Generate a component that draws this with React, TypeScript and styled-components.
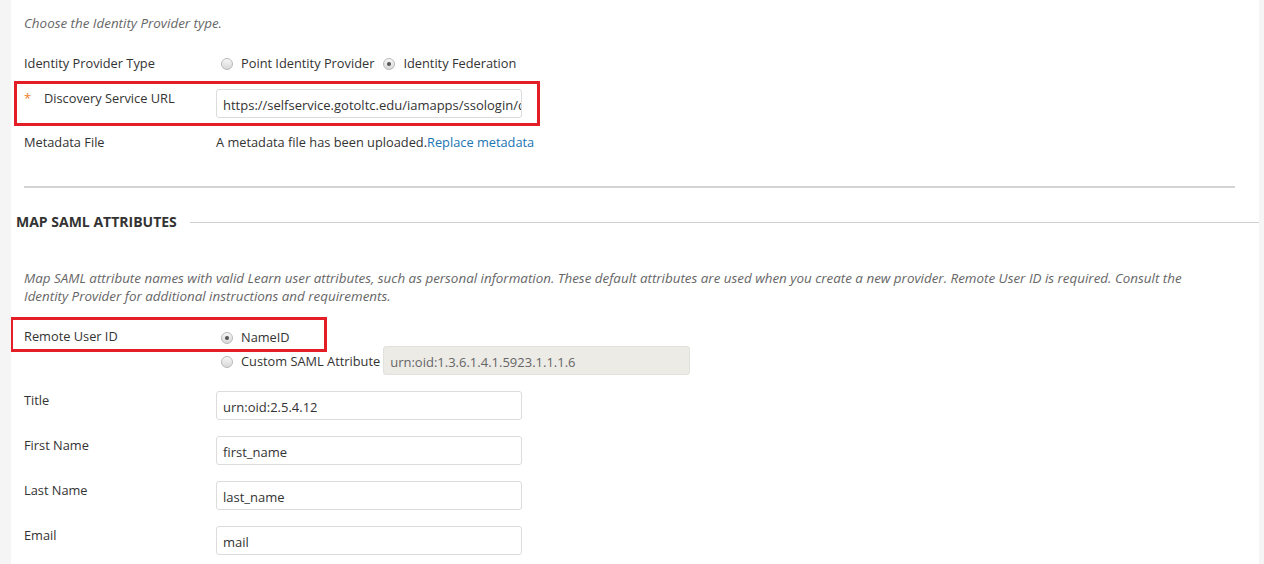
import React from 'react'
import styled, { createGlobalStyle } from 'styled-components'

const GlobalStyle = createGlobalStyle`
  html, body {
    margin: 0;
    padding: 0;
    background: #f5f5f5;
  }
  body {
    font-family: "Open Sans", "Liberation Sans", Arial, sans-serif;
    font-size: 12.8px;
    color: #333;
  }
`

const Page = styled.div`
  margin: 0 5px 0 11px;
  background: #fff;
  height: 564px;
  overflow: hidden;
`

const Instructions = styled.p<{ top: number }>`
  margin: ${({ top }) => top}px 0 0 13px;
  font-style: italic;
  font-size: 13.4px;
  color: #666;
  line-height: 18px;
`

const FieldRow = styled.div<{ top: number }>`
  position: relative;
  display: flex;
  align-items: flex-start;
  margin-top: ${({ top }) => top}px;
  padding-left: 13px;
  line-height: 18px;
`

const Label = styled.div`
  width: 192px;
  flex-shrink: 0;
  display: flex;
`

const Required = styled.span`
  width: 20px;
  color: #ef7f2b;
  font-size: 13px;
`

const Field = styled.div`
  display: flex;
  flex-direction: column;
`

const RadioGroup = styled.div`
  display: flex;
  align-items: center;
  padding-left: 5px;
`

const Option = styled.label`
  display: flex;
  align-items: center;
  margin-right: 9px;
  white-space: nowrap;
`

const RadioDot = styled.span<{ checked?: boolean }>`
  position: relative;
  display: inline-block;
  flex-shrink: 0;
  width: 12px;
  height: 12px;
  margin: 2px 8px 0 0;
  box-sizing: border-box;
  border-radius: 50%;
  border: 1px solid #b9b9b9;
  background: linear-gradient(#f7f7f7, #d8d8d8);
  &::after {
    content: '';
    display: ${({ checked }) => (checked ? 'block' : 'none')};
    position: absolute;
    left: 3px;
    top: 3px;
    width: 4px;
    height: 4px;
    border-radius: 50%;
    background: #555;
  }
`

const TextInput = styled.div<{ disabled?: boolean }>`
  width: 306px;
  height: 29px;
  box-sizing: border-box;
  padding: 2px 6px 0;
  display: flex;
  align-items: center;
  overflow: hidden;
  white-space: nowrap;
  font-size: 13px;
  border: 1px solid ${({ disabled }) => (disabled ? '#e2e1db' : '#dcdcdc')};
  border-radius: 3px;
  background: ${({ disabled }) => (disabled ? '#ecebe6' : '#fff')};
  color: ${({ disabled }) => (disabled ? '#666' : '#333')};
`

const Link = styled.a`
  color: #2174b3;
  text-decoration: none;
`

const Divider = styled.hr`
  margin: 35px 24px 0 13px;
  border: 0;
  border-top: 2px solid #d4d4d4;
  height: 0;
`

const SectionHeader = styled.div`
  display: flex;
  align-items: center;
  gap: 13px;
  margin-top: 24px;
  padding-left: 5px;
`

const SectionTitle = styled.h3`
  margin: 0;
  font-size: 14px;
  font-weight: 700;
  line-height: 20px;
  text-transform: uppercase;
  color: #333;
  white-space: nowrap;
`

const SectionRule = styled.div`
  flex: 1;
  border-top: 1px solid #cfcfcf;
`

const OptionStack = styled.div`
  display: flex;
  flex-direction: column;
  padding-left: 5px;
`

const StackedOption = styled.label`
  display: flex;
  align-items: center;
  white-space: nowrap;
  min-height: 19px;
`

const CustomInput = styled(TextInput)`
  width: 307px;
  margin-left: 3px;
`

const Annotation = styled.div<{ left: number; top: number; w: number; h: number }>`
  position: absolute;
  left: ${({ left }) => left}px;
  top: ${({ top }) => top}px;
  width: ${({ w }) => w}px;
  height: ${({ h }) => h}px;
  box-sizing: border-box;
  border: 3px solid #e31e26;
  pointer-events: none;
`

const attributes = [
  { label: 'Title', value: 'urn:oid:2.5.4.12' },
  { label: 'First Name', value: 'first_name' },
  { label: 'Last Name', value: 'last_name' },
  { label: 'Email', value: 'mail' },
]

export default function App() {
  return (
    <>
      <GlobalStyle />
      <Page>
        <Instructions top={14}>Choose the Identity Provider type.</Instructions>

        <FieldRow top={22}>
          <Label>Identity Provider Type</Label>
          <RadioGroup>
            <Option>
              <RadioDot />
              Point Identity Provider
            </Option>
            <Option>
              <RadioDot checked />
              Identity Federation
            </Option>
          </RadioGroup>
        </FieldRow>

        <FieldRow top={17}>
          <Annotation left={3} top={-8} w={526} h={45} />
          <Label>
            <Required>*</Required>Discovery Service URL
          </Label>
          <TextInput>https://selfservice.gotoltc.edu/iamapps/ssologin/discovery</TextInput>
        </FieldRow>

        <FieldRow top={15}>
          <Label>Metadata File</Label>
          <Field>
            <span>
              A metadata file has been uploaded.<Link href="#">Replace metadata</Link>
            </span>
          </Field>
        </FieldRow>

        <Divider />

        <SectionHeader>
          <SectionTitle>Map SAML Attributes</SectionTitle>
          <SectionRule />
        </SectionHeader>

        <Instructions top={37}>
          Map SAML attribute names with valid Learn user attributes, such as personal information. These
          default attributes are used when you create a new provider. Remote User ID is required. Consult the
          <br />
          Identity Provider for additional instructions and requirements.
        </Instructions>

        <FieldRow top={22}>
          <Annotation left={-1} top={-10} w={317} h={35} />
          <Label>Remote User ID</Label>
          <OptionStack>
            <StackedOption>
              <RadioDot checked />
              NameID
            </StackedOption>
            <StackedOption>
              <RadioDot />
              Custom SAML Attribute
              <CustomInput disabled>urn:oid:1.3.6.1.4.1.5923.1.1.1.6</CustomInput>
            </StackedOption>
          </OptionStack>
        </FieldRow>

        {attributes.map((a) => (
          <FieldRow key={a.label} top={16}>
            <Label>{a.label}</Label>
            <TextInput>{a.value}</TextInput>
          </FieldRow>
        ))}
      </Page>
    </>
  )
}
